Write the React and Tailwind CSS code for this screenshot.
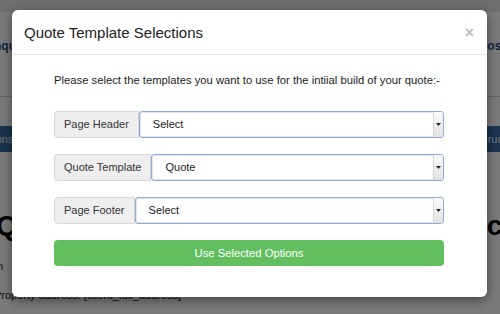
import React from "react";

function Row({ label, value }) {
  return (
    <div className="flex h-[27px] w-full items-stretch text-[11px] text-[#333]">
      <div className="flex items-center whitespace-nowrap rounded-l-[4px] border border-[#d6d6d6] bg-[#eeeeee] px-[9px]">
        {label}
      </div>
      <div className="flex flex-1 items-stretch rounded-[3px] border border-[#8fa9d9] bg-white shadow-[inset_0_0_0_0.5px_#b9c9ea]">
        <div className="flex flex-1 items-center pl-[13px] text-[#222]">{value}</div>
        <div className="flex w-[10px] items-center justify-center rounded-r-[2px] border-l border-[#d5d5d5] bg-gradient-to-b from-[#fbfbfb] to-[#e2e2e2]">
          <svg width="5" height="3" viewBox="0 0 5 3">
            <path d="M0 0H5L2.5 3Z" fill="#222" />
          </svg>
        </div>
      </div>
    </div>
  );
}

export default function App() {
  return (
    <div
      className="relative h-[314px] w-[500px] overflow-hidden bg-white"
      style={{ fontFamily: '"Liberation Sans", Arial, sans-serif' }}
    >
      {/* underlying page */}
      <div className="flex h-full flex-col">
        <div className="h-[12px] bg-[#e8e8e8]" />
        <div className="flex h-[85px] items-center justify-between border-b border-[#cfcfcf] pb-[16px] text-[12px] font-bold text-[#1f4e8a]">
          <span className="ml-[-14px]">Enquiries</span>
          <span className="mr-[-18px]">Proposals</span>
        </div>
        <div className="mt-[29px] flex h-[26px] items-center justify-between bg-[#3a6ea5] text-[11px] text-[#e6eef8]">
          <span className="ml-[-30px]">Response</span>
          <span className="mr-[-6px]">Instruct</span>
        </div>
        <div className="mt-[56px] flex items-center justify-between text-[28px] font-bold leading-[36px] text-black">
          <span className="ml-[-4px]">Quote</span>
          <span className="mr-[-18px]">ence</span>
        </div>
        <div className="mt-[14px] text-[11px] text-[#222]">
          <span className="ml-[-30px]">Markin</span>
        </div>
        <div className="mt-[12px] text-[11px] text-[#222]">
          <span className="ml-[-6px]">Property address: [client_full_address]</span>
        </div>
      </div>

      {/* overlay */}
      <div className="absolute inset-0 bg-black/[0.52]" />

      {/* modal */}
      <div className="absolute left-[12px] top-[10px] flex h-[287px] w-[475px] flex-col rounded-[6px] bg-white shadow-[0_3px_12px_rgba(0,0,0,0.45)]">
        <div className="flex h-[45px] items-center justify-between border-b border-[#e5e5e5] pl-[12px] pr-[13px] pt-[1px]">
          <h4 className="text-[15px] leading-none text-[#222]">Quote Template Selections</h4>
          <span className="text-[16px] font-bold leading-none text-[#bdbdbd]">×</span>
        </div>
        <div className="flex flex-1 flex-col px-[42px] pt-[18px]">
          <p className="whitespace-nowrap text-[11.25px] leading-[14px] text-[#222]">
            Please select the templates you want to use for the intiial build of your quote:-
          </p>
          <div className="mt-[24px] flex flex-col gap-[16px]">
            <div className="w-[390px]">
              <Row label="Page Header" value="Select" />
            </div>
            <div className="w-[390px]">
              <Row label="Quote Template" value="Quote" />
            </div>
            <div className="w-[390px]">
              <Row label="Page Footer" value="Select" />
            </div>
          </div>
          <button className="mt-[16px] h-[26px] w-[390px] rounded-[4px] bg-[#62bf60] text-[11.25px] text-white">
            Use Selected Options
          </button>
        </div>
      </div>
    </div>
  );
}
